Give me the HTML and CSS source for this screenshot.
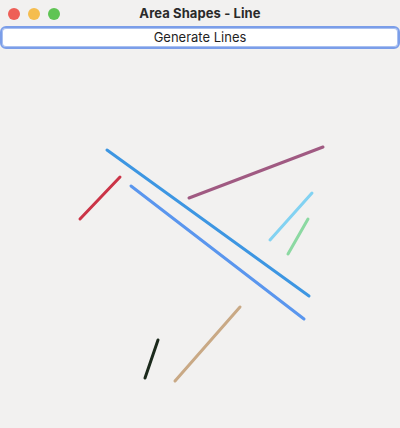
FILE: index.html
```html
<!DOCTYPE html>
<html>
<head>
<meta charset="utf-8">
<link rel="stylesheet" href="styles.css">
</head>
<body>
<div class="window">
  <div class="titlebar">
    <div class="lights">
      <span class="light red"></span>
      <span class="light yellow"></span>
      <span class="light green"></span>
    </div>
    <div class="title">Area Shapes - Line</div>
  </div>
  <div class="toolbar">
    <button class="gen">Generate Lines</button>
  </div>
  <svg class="canvas" width="400" height="378" viewBox="0 50 400 378">
    <g stroke-width="3" stroke-linecap="round">
      <line x1="107" y1="150" x2="309" y2="296" stroke="#3d96e2"/>
      <line x1="131" y1="186" x2="304" y2="319" stroke="#5a96ee"/>
      <line x1="80" y1="219" x2="120" y2="177" stroke="#cb3447"/>
      <line x1="189" y1="198" x2="323" y2="147" stroke="#a05a82"/>
      <line x1="270" y1="240" x2="312" y2="193" stroke="#82d2f2"/>
      <line x1="288" y1="254" x2="308" y2="219" stroke="#8cd9a2"/>
      <line x1="145" y1="378" x2="158" y2="340" stroke="#1c2a1c"/>
      <line x1="175" y1="381" x2="240" y2="307" stroke="#c9a985"/>
    </g>
  </svg>
</div>
</body>
</html>
```

FILE: styles.css
```css
html, body {
  margin: 0;
  padding: 0;
  background: #f2f1f0;
}
.window {
  width: 400px;
  height: 428px;
  display: flex;
  flex-direction: column;
  background: #f2f1f0;
  font-family: "Inter", "Liberation Sans", sans-serif;
  overflow: hidden;
}
.titlebar {
  position: relative;
  height: 26px;
  display: flex;
  align-items: center;
  justify-content: center;
}
.lights {
  position: absolute;
  left: 8px;
  top: 8px;
  display: flex;
  gap: 8px;
}
.light {
  width: 12px;
  height: 12px;
  border-radius: 50%;
  display: block;
}
.light.red { background: #ee5f57; }
.light.yellow { background: #f5bd4f; }
.light.green { background: #5fc454; }
.title {
  font-size: 13px;
  font-weight: 700;
  color: #2a2a2a;
  letter-spacing: 0.1px;
}
.toolbar {
  height: 24px;
  display: flex;
}
.gen {
  flex: 1;
  margin: 0;
  height: 23px;
  border: 2px solid #7b9ee9;
  box-shadow: inset 0 0 0 1px #a9c0f0;
  border-radius: 6px;
  background: #ffffff;
  font-family: "Inter", "Liberation Sans", sans-serif;
  font-size: 13px;
  color: #1f1f1f;
  padding: 0 0 2px 0;
}
.canvas {
  display: block;
}
```
